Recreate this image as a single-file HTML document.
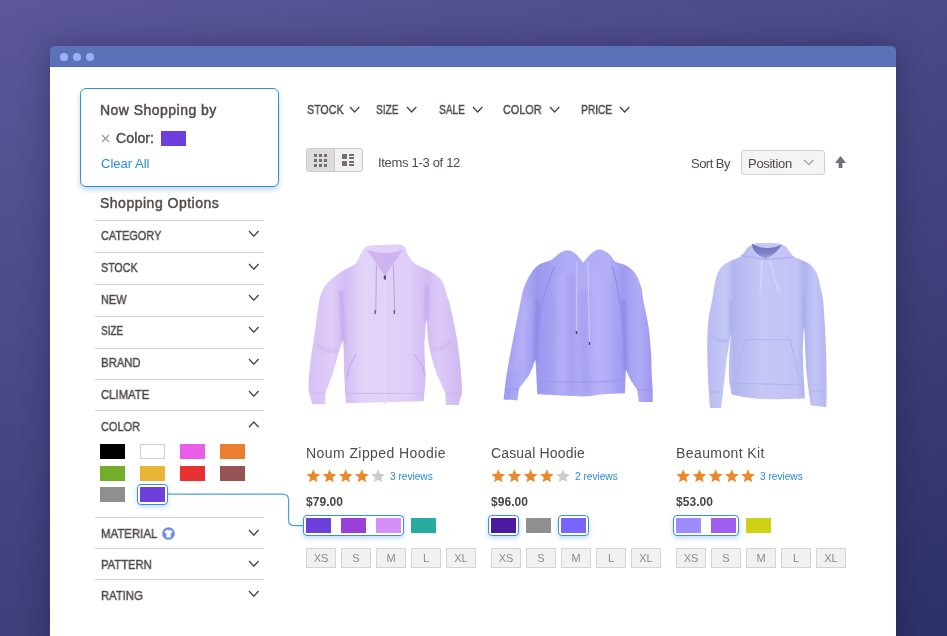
<!DOCTYPE html>
<html><head><meta charset="utf-8">
<style>
html,body{margin:0;padding:0;}
body{width:947px;height:636px;overflow:hidden;position:relative;
 background:linear-gradient(159deg,#5b5799 0%,#2e3068 100%);
 font-family:"Liberation Sans",sans-serif;color:#575352;-webkit-font-smoothing:antialiased;}
.win{position:absolute;left:50px;top:46px;width:846px;height:600px;background:linear-gradient(#5c72b8 0,#5c72b8 10px,#fff 10px);border-radius:5px 5px 0 0;
 box-shadow:0 0 28px rgba(20,18,60,0.35);overflow:hidden;}
.bar{position:absolute;left:0;top:0;width:846px;height:20px;background:#5c72b8;border-bottom:1px solid #5166ae;border-radius:5px 5px 0 0;}
.bar i{position:absolute;top:7px;width:8px;height:8px;border-radius:50%;background:#9caef8;}
.t{position:absolute;white-space:nowrap;line-height:1;will-change:transform;}
.sb{-webkit-text-stroke:0.45px currentColor;}
.hr{position:absolute;width:169px;height:1px;background:#cfcfcf;}
.chev{position:absolute;}
.sw{position:absolute;width:25px;height:15px;}
.sel{position:absolute;box-sizing:border-box;border:1.6px solid #3b90dd;border-radius:4px;box-shadow:0 2px 5px rgba(59,144,221,0.35);background:#fff;}
.size{position:absolute;width:28px;height:18px;background:#f1f1f1;border:1px solid #d5d5d5;font-size:11px;color:#8c8c8c;text-align:center;line-height:18px;}
</style></head>
<body>
<div class="win"><div class="bar"><i style="left:10px"></i><i style="left:23px"></i><i style="left:36px"></i></div></div>
<div style="position:absolute;left:80px;top:88px;width:197px;height:97px;border:1.3px solid #3490dc;border-radius:6px;box-shadow:0 3px 5px rgba(40,110,190,0.28);background:#fff"></div>
<div class="t sb" style="left:100.35px;top:103.18px;font-size:14px;color:#504b49;font-weight:normal;letter-spacing:0.468px;">Now Shopping by</div>
<svg style="position:absolute;left:101px;top:134px" width="9" height="9"><path d="M1 1L8 8M8 1L1 8" stroke="#9a9a9a" stroke-width="1.2"/></svg>
<div class="t sb" style="left:116.15px;top:131.18px;font-size:14px;color:#504b49;font-weight:normal;letter-spacing:0.130px;">Color:</div>
<div class="sw" style="left:161px;top:131px;background:#6f3fdb"></div>
<div class="t " style="left:100.60px;top:156.91px;font-size:13px;color:#2b8ad8;font-weight:normal;letter-spacing:0.000px;">Clear All</div>
<div class="t sb" style="left:100.45px;top:196.18px;font-size:14px;color:#504b49;font-weight:normal;letter-spacing:0.500px;">Shopping Options</div>
<div class="hr" style="left:95px;top:220.0px"></div>
<div class="t sb" style="left:100.95px;top:229.51px;font-size:12.2px;color:#504b49;font-weight:normal;letter-spacing:0.000px;transform:scaleX(0.8967);transform-origin:0 0;">CATEGORY</div>
<svg class="chev" style="left:248px;top:230.29999999999998px" width="11.6" height="7.2"><path d="M1 1 L5.8 6.2 L10.6 1" fill="none" stroke="#4a4646" stroke-width="1.35"/></svg>
<div class="hr" style="left:95px;top:252.0px"></div>
<div class="t sb" style="left:100.95px;top:261.71px;font-size:12.2px;color:#504b49;font-weight:normal;letter-spacing:0.000px;transform:scaleX(0.8759);transform-origin:0 0;">STOCK</div>
<svg class="chev" style="left:248px;top:262.5px" width="11.6" height="7.2"><path d="M1 1 L5.8 6.2 L10.6 1" fill="none" stroke="#4a4646" stroke-width="1.35"/></svg>
<div class="hr" style="left:95px;top:284.2px"></div>
<div class="t sb" style="left:100.95px;top:293.51px;font-size:12.2px;color:#504b49;font-weight:normal;letter-spacing:0.000px;transform:scaleX(0.8995);transform-origin:0 0;">NEW</div>
<svg class="chev" style="left:248px;top:294.3px" width="11.6" height="7.2"><path d="M1 1 L5.8 6.2 L10.6 1" fill="none" stroke="#4a4646" stroke-width="1.35"/></svg>
<div class="hr" style="left:95px;top:316.1px"></div>
<div class="t sb" style="left:100.95px;top:325.41px;font-size:12.2px;color:#504b49;font-weight:normal;letter-spacing:0.000px;transform:scaleX(0.8143);transform-origin:0 0;">SIZE</div>
<svg class="chev" style="left:248px;top:326.2px" width="11.6" height="7.2"><path d="M1 1 L5.8 6.2 L10.6 1" fill="none" stroke="#4a4646" stroke-width="1.35"/></svg>
<div class="hr" style="left:95px;top:348.0px"></div>
<div class="t sb" style="left:100.95px;top:357.21px;font-size:12.2px;color:#504b49;font-weight:normal;letter-spacing:0.000px;transform:scaleX(0.9289);transform-origin:0 0;">BRAND</div>
<svg class="chev" style="left:248px;top:358.0px" width="11.6" height="7.2"><path d="M1 1 L5.8 6.2 L10.6 1" fill="none" stroke="#4a4646" stroke-width="1.35"/></svg>
<div class="hr" style="left:95px;top:378.9px"></div>
<div class="t sb" style="left:100.95px;top:389.11px;font-size:12.2px;color:#504b49;font-weight:normal;letter-spacing:0.000px;transform:scaleX(0.9309);transform-origin:0 0;">CLIMATE</div>
<svg class="chev" style="left:248px;top:389.9px" width="11.6" height="7.2"><path d="M1 1 L5.8 6.2 L10.6 1" fill="none" stroke="#4a4646" stroke-width="1.35"/></svg>
<div class="hr" style="left:95px;top:410px"></div>
<div class="t sb" style="left:100.95px;top:420.81px;font-size:12.2px;color:#504b49;font-weight:normal;letter-spacing:0.000px;transform:scaleX(0.9007);transform-origin:0 0;">COLOR</div>
<svg class="chev" style="left:248px;top:420.5px" width="11.6" height="7.2"><path d="M1 6.2 L5.8 1 L10.6 6.2" fill="none" stroke="#4a4646" stroke-width="1.35"/></svg>
<div class="sw" style="left:100px;top:444px;background:#000000"></div>
<div class="sw" style="left:140px;top:444px;background:#fff;box-sizing:border-box;border:1px solid #cfcfcf"></div>
<div class="sw" style="left:180px;top:444px;background:#e95de9"></div>
<div class="sw" style="left:220px;top:444px;background:#ec7e32"></div>
<div class="sw" style="left:100px;top:466px;background:#72ad2c"></div>
<div class="sw" style="left:140px;top:466px;background:#e8b534"></div>
<div class="sw" style="left:180px;top:466px;background:#e83131"></div>
<div class="sw" style="left:220px;top:466px;background:#955353"></div>
<div class="sw" style="left:100px;top:487px;background:#8f8f8f"></div>
<div class="sel" style="left:137.4px;top:484.4px;width:30.2px;height:20.2px"></div>
<div class="sw" style="left:140px;top:487px;background:#6f3fdb"></div>
<div class="hr" style="left:95px;top:517.1px"></div>
<div class="t sb" style="left:101.05px;top:527.71px;font-size:12.2px;color:#504b49;font-weight:normal;letter-spacing:0.000px;transform:scaleX(0.9377);transform-origin:0 0;">MATERIAL</div>
<svg class="chev" style="left:248px;top:528.5px" width="11.6" height="7.2"><path d="M1 1 L5.8 6.2 L10.6 1" fill="none" stroke="#4a4646" stroke-width="1.35"/></svg>
<div class="hr" style="left:95px;top:547.9px"></div>
<div class="t sb" style="left:101.05px;top:558.91px;font-size:12.2px;color:#504b49;font-weight:normal;letter-spacing:0.000px;transform:scaleX(0.9206);transform-origin:0 0;">PATTERN</div>
<svg class="chev" style="left:248px;top:559.7px" width="11.6" height="7.2"><path d="M1 1 L5.8 6.2 L10.6 1" fill="none" stroke="#4a4646" stroke-width="1.35"/></svg>
<div class="hr" style="left:95px;top:578.8px"></div>
<div class="t sb" style="left:101.05px;top:589.61px;font-size:12.2px;color:#504b49;font-weight:normal;letter-spacing:0.000px;transform:scaleX(0.9262);transform-origin:0 0;">RATING</div>
<svg class="chev" style="left:248px;top:590.4000000000001px" width="11.6" height="7.2"><path d="M1 1 L5.8 6.2 L10.6 1" fill="none" stroke="#4a4646" stroke-width="1.35"/></svg>
<svg style="position:absolute;left:161.8px;top:526.7px" width="13" height="13" viewBox="0 0 14 14"><circle cx="7" cy="7" r="6.8" fill="#6e8ee8"/><path d="M2.8 4.6 L5.4 3 Q7 4.3 8.6 3 L11.2 4.6 L10.3 7 L9.3 6.6 L9.3 11.3 L4.7 11.3 L4.7 6.6 L3.7 7 Z" fill="#fff"/></svg>
<svg style="position:absolute;left:160px;top:488px" width="150" height="45"><path d="M7.6 6 H122.6 Q128.6 6 128.6 12 V31.7 Q128.6 37.7 134.6 37.7 H144" fill="none" stroke="#4d9fe6" stroke-width="1.25"/></svg>
<div class="t sb" style="left:306.75px;top:103.91px;font-size:12.2px;color:#504b49;font-weight:normal;letter-spacing:0.000px;transform:scaleX(0.8759);transform-origin:0 0;">STOCK</div>
<svg class="chev" style="left:348.8px;top:106.4px" width="11.3" height="7"><path d="M1 1 L5.65 6 L10.3 1" fill="none" stroke="#4a4646" stroke-width="1.35"/></svg>
<div class="t sb" style="left:376.45px;top:103.91px;font-size:12.2px;color:#504b49;font-weight:normal;letter-spacing:0.000px;transform:scaleX(0.8286);transform-origin:0 0;">SIZE</div>
<svg class="chev" style="left:405.5px;top:106.4px" width="11.3" height="7"><path d="M1 1 L5.65 6 L10.3 1" fill="none" stroke="#4a4646" stroke-width="1.35"/></svg>
<div class="t sb" style="left:438.85px;top:103.91px;font-size:12.2px;color:#504b49;font-weight:normal;letter-spacing:0.000px;transform:scaleX(0.8287);transform-origin:0 0;">SALE</div>
<svg class="chev" style="left:472.2px;top:106.4px" width="11.3" height="7"><path d="M1 1 L5.65 6 L10.3 1" fill="none" stroke="#4a4646" stroke-width="1.35"/></svg>
<div class="t sb" style="left:502.95px;top:103.91px;font-size:12.2px;color:#504b49;font-weight:normal;letter-spacing:0.000px;transform:scaleX(0.8916);transform-origin:0 0;">COLOR</div>
<svg class="chev" style="left:548.7px;top:106.4px" width="11.3" height="7"><path d="M1 1 L5.65 6 L10.3 1" fill="none" stroke="#4a4646" stroke-width="1.35"/></svg>
<div class="t sb" style="left:580.75px;top:103.91px;font-size:12.2px;color:#504b49;font-weight:normal;letter-spacing:0.000px;transform:scaleX(0.8377);transform-origin:0 0;">PRICE</div>
<svg class="chev" style="left:618.6px;top:106.4px" width="11.3" height="7"><path d="M1 1 L5.65 6 L10.3 1" fill="none" stroke="#4a4646" stroke-width="1.35"/></svg>
<div style="position:absolute;left:306px;top:148px;width:55px;height:22px;border:1px solid #cbcbcb;border-radius:3px;background:#f0f0f0;overflow:hidden"><div style="position:absolute;left:0;top:0;width:27px;height:22px;background:#dcdcdc;border-right:1px solid #cbcbcb"></div></div>
<svg style="position:absolute;left:0;top:0" width="947" height="636"><rect x="314" y="154" width="3" height="3" fill="#776d6d"/><rect x="314" y="159" width="3" height="3" fill="#776d6d"/><rect x="314" y="164" width="3" height="3" fill="#776d6d"/><rect x="319" y="154" width="3" height="3" fill="#776d6d"/><rect x="319" y="159" width="3" height="3" fill="#776d6d"/><rect x="319" y="164" width="3" height="3" fill="#776d6d"/><rect x="324" y="154" width="3" height="3" fill="#776d6d"/><rect x="324" y="159" width="3" height="3" fill="#776d6d"/><rect x="324" y="164" width="3" height="3" fill="#776d6d"/><rect x="342" y="154" width="5" height="5" fill="#776d6d"/><rect x="342" y="161" width="5" height="5" fill="#776d6d"/><rect x="349" y="154" width="5" height="2" fill="#776d6d"/><rect x="349" y="157" width="5" height="2" fill="#776d6d"/><rect x="349" y="161" width="5" height="2" fill="#776d6d"/><rect x="349" y="164" width="5" height="2" fill="#776d6d"/></svg>
<div class="t " style="left:377.80px;top:156.31px;font-size:13px;color:#504b49;font-weight:normal;letter-spacing:-0.314px;">Items 1-3 of 12</div>
<div class="t " style="left:691.30px;top:156.81px;font-size:13px;color:#504b49;font-weight:normal;letter-spacing:-0.517px;">Sort By</div>
<div style="position:absolute;left:741px;top:150px;width:82px;height:23px;border:1px solid #d0d0d0;border-radius:3px;background:#f4f4f4"></div>
<div class="t " style="left:748.20px;top:156.81px;font-size:13px;color:#504b49;font-weight:normal;letter-spacing:-0.293px;">Position</div>
<svg class="chev" style="left:803.4px;top:159px" width="11.5" height="6.5"><path d="M1 1 L5.75 5.5 L10.5 1" fill="none" stroke="#9a9a9a" stroke-width="1.1"/></svg>
<svg style="position:absolute;left:834px;top:155px" width="13" height="14"><path d="M6.5 1 L12 8 L8.4 8 L8.4 13 L4.6 13 L4.6 8 L1 8 Z" fill="#6b7377"/></svg>
<div class="t " style="left:305.90px;top:446.18px;font-size:14px;color:#504b49;font-weight:normal;letter-spacing:0.429px;">Noum Zipped Hoodie</div>
<svg style="position:absolute;left:0;top:0" width="947" height="636"><polygon points="313.30,469.20 315.20,473.78 320.15,474.18 316.38,477.40 317.53,482.22 313.30,479.64 309.07,482.22 310.22,477.40 306.45,474.18 311.40,473.78" fill="#e8892b"/><polygon points="329.50,469.20 331.40,473.78 336.35,474.18 332.58,477.40 333.73,482.22 329.50,479.64 325.27,482.22 326.42,477.40 322.65,474.18 327.60,473.78" fill="#e8892b"/><polygon points="345.70,469.20 347.60,473.78 352.55,474.18 348.78,477.40 349.93,482.22 345.70,479.64 341.47,482.22 342.62,477.40 338.85,474.18 343.80,473.78" fill="#e8892b"/><polygon points="361.90,469.20 363.80,473.78 368.75,474.18 364.98,477.40 366.13,482.22 361.90,479.64 357.67,482.22 358.82,477.40 355.05,474.18 360.00,473.78" fill="#e8892b"/><polygon points="378.10,469.20 380.00,473.78 384.95,474.18 381.18,477.40 382.33,482.22 378.10,479.64 373.87,482.22 375.02,477.40 371.25,474.18 376.20,473.78" fill="#cccccc"/></svg>
<div class="t " style="left:390.30px;top:472.07px;font-size:10.2px;color:#2b8ad8;font-weight:normal;letter-spacing:-0.038px;">3 reviews</div>
<div class="t " style="left:306.30px;top:495.94px;font-size:12px;color:#4a4544;font-weight:bold;letter-spacing:0.060px;">$79.00</div>
<div class="sel" style="left:303.4px;top:515.4px;width:100.2px;height:20.2px"></div>
<div class="sw" style="left:306px;top:518px;background:#6c3fdb"></div>
<div class="sw" style="left:341px;top:518px;background:#9b3fdb"></div>
<div class="sw" style="left:376px;top:518px;background:#d48ff8"></div>
<div class="sw" style="left:411px;top:518px;background:#2aab9f"></div>
<div class="size" style="left:306px;top:548px">XS</div>
<div class="size" style="left:341px;top:548px">S</div>
<div class="size" style="left:376px;top:548px">M</div>
<div class="size" style="left:411px;top:548px">L</div>
<div class="size" style="left:446px;top:548px">XL</div>
<div class="t " style="left:490.85px;top:446.18px;font-size:14px;color:#504b49;font-weight:normal;letter-spacing:0.154px;">Casual Hoodie</div>
<svg style="position:absolute;left:0;top:0" width="947" height="636"><polygon points="498.25,469.20 500.15,473.78 505.10,474.18 501.33,477.40 502.48,482.22 498.25,479.64 494.02,482.22 495.17,477.40 491.40,474.18 496.35,473.78" fill="#e8892b"/><polygon points="514.45,469.20 516.35,473.78 521.30,474.18 517.53,477.40 518.68,482.22 514.45,479.64 510.22,482.22 511.37,477.40 507.60,474.18 512.55,473.78" fill="#e8892b"/><polygon points="530.65,469.20 532.55,473.78 537.50,474.18 533.73,477.40 534.88,482.22 530.65,479.64 526.42,482.22 527.57,477.40 523.80,474.18 528.75,473.78" fill="#e8892b"/><polygon points="546.85,469.20 548.75,473.78 553.70,474.18 549.93,477.40 551.08,482.22 546.85,479.64 542.62,482.22 543.77,477.40 540.00,474.18 544.95,473.78" fill="#e8892b"/><polygon points="563.05,469.20 564.95,473.78 569.90,474.18 566.13,477.40 567.28,482.22 563.05,479.64 558.82,482.22 559.97,477.40 556.20,474.18 561.15,473.78" fill="#cccccc"/></svg>
<div class="t " style="left:575.25px;top:472.07px;font-size:10.2px;color:#2b8ad8;font-weight:normal;letter-spacing:-0.038px;">2 reviews</div>
<div class="t " style="left:491.25px;top:495.94px;font-size:12px;color:#4a4544;font-weight:bold;letter-spacing:0.060px;">$96.00</div>
<div class="sel" style="left:488.4px;top:515.4px;width:30.2px;height:20.2px"></div>
<div class="sel" style="left:558.4px;top:515.4px;width:30.2px;height:20.2px"></div>
<div class="sw" style="left:491px;top:518px;background:#4a1aa0"></div>
<div class="sw" style="left:526px;top:518px;background:#8f8f8f"></div>
<div class="sw" style="left:561px;top:518px;background:#7a64ff"></div>
<div class="size" style="left:491px;top:548px">XS</div>
<div class="size" style="left:526px;top:548px">S</div>
<div class="size" style="left:561px;top:548px">M</div>
<div class="size" style="left:596px;top:548px">L</div>
<div class="size" style="left:631px;top:548px">XL</div>
<div class="t " style="left:675.85px;top:446.18px;font-size:14px;color:#504b49;font-weight:normal;letter-spacing:0.405px;">Beaumont Kit</div>
<svg style="position:absolute;left:0;top:0" width="947" height="636"><polygon points="683.25,469.20 685.15,473.78 690.10,474.18 686.33,477.40 687.48,482.22 683.25,479.64 679.02,482.22 680.17,477.40 676.40,474.18 681.35,473.78" fill="#e8892b"/><polygon points="699.45,469.20 701.35,473.78 706.30,474.18 702.53,477.40 703.68,482.22 699.45,479.64 695.22,482.22 696.37,477.40 692.60,474.18 697.55,473.78" fill="#e8892b"/><polygon points="715.65,469.20 717.55,473.78 722.50,474.18 718.73,477.40 719.88,482.22 715.65,479.64 711.42,482.22 712.57,477.40 708.80,474.18 713.75,473.78" fill="#e8892b"/><polygon points="731.85,469.20 733.75,473.78 738.70,474.18 734.93,477.40 736.08,482.22 731.85,479.64 727.62,482.22 728.77,477.40 725.00,474.18 729.95,473.78" fill="#e8892b"/><polygon points="748.05,469.20 749.95,473.78 754.90,474.18 751.13,477.40 752.28,482.22 748.05,479.64 743.82,482.22 744.97,477.40 741.20,474.18 746.15,473.78" fill="#e8892b"/></svg>
<div class="t " style="left:760.25px;top:472.07px;font-size:10.2px;color:#2b8ad8;font-weight:normal;letter-spacing:-0.038px;">3 reviews</div>
<div class="t " style="left:676.25px;top:495.94px;font-size:12px;color:#4a4544;font-weight:bold;letter-spacing:0.060px;">$53.00</div>
<div class="sel" style="left:673.4px;top:515.4px;width:65.2px;height:20.2px"></div>
<div class="sw" style="left:676px;top:518px;background:#9d8cff"></div>
<div class="sw" style="left:711px;top:518px;background:#a05ef0"></div>
<div class="sw" style="left:746px;top:518px;background:#d0d016"></div>
<div class="size" style="left:676px;top:548px">XS</div>
<div class="size" style="left:711px;top:548px">S</div>
<div class="size" style="left:746px;top:548px">M</div>
<div class="size" style="left:781px;top:548px">L</div>
<div class="size" style="left:816px;top:548px">XL</div>
<svg style="position:absolute;left:0;top:0" width="947" height="636">
<defs>
<filter id="bl" x="-20%" y="-20%" width="140%" height="140%"><feGaussianBlur stdDeviation="1.6"/></filter><filter id="bl2" x="-30%" y="-30%" width="160%" height="160%"><feGaussianBlur stdDeviation="3.5"/></filter>
<linearGradient id="g1" gradientUnits="userSpaceOnUse" x1="309" y1="0" x2="460" y2="0">
<stop offset="0" stop-color="#d6c1f4"/><stop offset="0.15" stop-color="#dfcdf8"/><stop offset="0.24" stop-color="#d3bdf3"/><stop offset="0.35" stop-color="#e2d3f9"/><stop offset="0.65" stop-color="#dfcff8"/><stop offset="0.78" stop-color="#d2bcf3"/><stop offset="0.86" stop-color="#dccaf7"/><stop offset="1" stop-color="#d0b9f2"/></linearGradient>
<linearGradient id="g2" gradientUnits="userSpaceOnUse" x1="505" y1="0" x2="653" y2="0">
<stop offset="0" stop-color="#a19bf0"/><stop offset="0.12" stop-color="#b1acf6"/><stop offset="0.22" stop-color="#9d96ee"/><stop offset="0.4" stop-color="#b0abf6"/><stop offset="0.7" stop-color="#b3aef6"/><stop offset="0.8" stop-color="#a09af0"/><stop offset="0.9" stop-color="#b0abf5"/><stop offset="1" stop-color="#9e97ef"/></linearGradient>
<linearGradient id="g3" gradientUnits="userSpaceOnUse" x1="708" y1="0" x2="826" y2="0">
<stop offset="0" stop-color="#babcf2"/><stop offset="0.15" stop-color="#c6c8f6"/><stop offset="0.22" stop-color="#b3b5ef"/><stop offset="0.45" stop-color="#c6c7f6"/><stop offset="0.75" stop-color="#c2c3f5"/><stop offset="0.82" stop-color="#b1b3ef"/><stop offset="0.9" stop-color="#c2c4f5"/><stop offset="1" stop-color="#b6b8f1"/></linearGradient>
</defs>
<path d="M355.7 263.4 C358.8 260.4 359.2 256.0 361.2 253.1 C363.1 250.2 363.4 247.5 367.4 246.2 C371.4 244.8 379.1 245.1 385.0 245.0 C390.9 244.9 399.2 243.9 403.0 245.5 C406.8 247.1 405.9 251.5 407.8 254.5 C409.8 257.5 411.0 260.7 414.7 263.4 C418.4 266.1 425.4 268.3 429.8 270.9 C434.2 273.5 438.2 276.0 440.8 279.2 C443.4 282.4 443.6 285.1 445.3 290.0 C447.0 294.9 449.0 301.0 450.9 308.9 C452.8 316.8 455.0 327.8 456.6 337.2 C458.2 346.6 459.4 356.4 460.4 365.5 C461.3 374.6 462.3 391.9 462.3 391.9 C462.3 391.9 458.5 405.1 458.5 405.1 C458.5 405.1 446.0 405.0 446.0 405.0 C446.0 405.0 445.3 392.8 445.3 392.8 C445.3 392.8 438.5 378.8 435.8 371.1 C433.1 363.4 430.8 355.7 429.2 346.6 C427.6 337.5 426.4 316.4 426.4 316.4 C426.4 316.4 424.6 336.9 424.5 346.6 C424.4 356.4 425.5 367.3 425.5 374.9 C425.5 382.4 424.5 391.9 424.5 391.9 C424.5 391.9 423.6 401.3 423.6 401.3 C423.6 401.3 346.2 403.2 346.2 403.2 C346.2 403.2 345.3 395.7 345.3 395.7 C345.3 395.7 344.6 384.3 344.3 374.9 C344.0 365.4 343.4 339.0 343.4 339.0 C343.4 339.0 342.2 341.6 340.6 346.6 C339.0 351.6 335.7 363.5 334.0 369.2 C332.3 374.9 331.6 376.7 330.2 380.6 C328.8 384.5 325.5 392.8 325.5 392.8 C325.5 392.8 325.5 404.2 325.5 404.2 C325.5 404.2 312.3 404.2 312.3 404.2 C312.3 404.2 308.5 390.0 308.5 390.0 C308.5 390.0 308.2 389.0 308.5 384.3 C308.8 379.6 309.4 369.6 310.4 361.7 C311.3 353.8 312.9 346.0 314.2 337.2 C315.4 328.4 316.7 316.3 317.9 308.9 C319.1 301.5 319.7 297.4 321.4 292.9 C323.1 288.4 324.7 285.6 328.2 281.9 C331.7 278.2 338.0 274.0 342.6 270.9 C347.2 267.8 352.6 266.4 355.7 263.4 Z" fill="url(#g1)"/>
<clipPath id="c1"><path d="M355.7 263.4 C358.8 260.4 359.2 256.0 361.2 253.1 C363.1 250.2 363.4 247.5 367.4 246.2 C371.4 244.8 379.1 245.1 385.0 245.0 C390.9 244.9 399.2 243.9 403.0 245.5 C406.8 247.1 405.9 251.5 407.8 254.5 C409.8 257.5 411.0 260.7 414.7 263.4 C418.4 266.1 425.4 268.3 429.8 270.9 C434.2 273.5 438.2 276.0 440.8 279.2 C443.4 282.4 443.6 285.1 445.3 290.0 C447.0 294.9 449.0 301.0 450.9 308.9 C452.8 316.8 455.0 327.8 456.6 337.2 C458.2 346.6 459.4 356.4 460.4 365.5 C461.3 374.6 462.3 391.9 462.3 391.9 C462.3 391.9 458.5 405.1 458.5 405.1 C458.5 405.1 446.0 405.0 446.0 405.0 C446.0 405.0 445.3 392.8 445.3 392.8 C445.3 392.8 438.5 378.8 435.8 371.1 C433.1 363.4 430.8 355.7 429.2 346.6 C427.6 337.5 426.4 316.4 426.4 316.4 C426.4 316.4 424.6 336.9 424.5 346.6 C424.4 356.4 425.5 367.3 425.5 374.9 C425.5 382.4 424.5 391.9 424.5 391.9 C424.5 391.9 423.6 401.3 423.6 401.3 C423.6 401.3 346.2 403.2 346.2 403.2 C346.2 403.2 345.3 395.7 345.3 395.7 C345.3 395.7 344.6 384.3 344.3 374.9 C344.0 365.4 343.4 339.0 343.4 339.0 C343.4 339.0 342.2 341.6 340.6 346.6 C339.0 351.6 335.7 363.5 334.0 369.2 C332.3 374.9 331.6 376.7 330.2 380.6 C328.8 384.5 325.5 392.8 325.5 392.8 C325.5 392.8 325.5 404.2 325.5 404.2 C325.5 404.2 312.3 404.2 312.3 404.2 C312.3 404.2 308.5 390.0 308.5 390.0 C308.5 390.0 308.2 389.0 308.5 384.3 C308.8 379.6 309.4 369.6 310.4 361.7 C311.3 353.8 312.9 346.0 314.2 337.2 C315.4 328.4 316.7 316.3 317.9 308.9 C319.1 301.5 319.7 297.4 321.4 292.9 C323.1 288.4 324.7 285.6 328.2 281.9 C331.7 278.2 338.0 274.0 342.6 270.9 C347.2 267.8 352.6 266.4 355.7 263.4 Z"/></clipPath>
<g clip-path="url(#c1)" filter="url(#bl)">
<path d="M341 290 C342 310 343 325 343.4 345 M427 285 C427 300 426.5 310 426.4 322" stroke="#c3a9ec" stroke-width="3.5" fill="none"/>
<path d="M317 345 C322 350 330 352 338 350 M452 340 C447 346 440 350 432 349" stroke="#cdb5f0" stroke-width="2.5" fill="none"/>
</g>
<path d="M367 250 C375 262 380 268 385 276 C390 268 396 260 403 250 C392 254 378 254 367 250 Z" fill="#cdb3ef"/>
<path d="M384.9 276 L384.9 404" stroke="#e6dafa" stroke-width="1.2"/>
<rect x="383.8" y="275.5" width="2.2" height="4" fill="#5a4a6a"/>
<path d="M376.4 265 L375.8 312 M393.4 265 L394.8 312" stroke="#b39bdb" stroke-width="0.9"/>
<path d="M375.2 310 L375.2 314 M394.3 310 L394.3 314" stroke="#6a5f7a" stroke-width="1.4"/>
<path d="M356 354 C352 362 346 370 348 377 M414 354 C420 362 426 370 424 377" stroke="#c4aaec" stroke-width="1.2" fill="none"/>
<path d="M346 393.4 L424 393.4 M311 393 L325.5 393 M446 393.5 L461.5 393.5" stroke="#cfb8f1" stroke-width="1"/>
<path d="M551.1 260.0 C554.7 258.0 556.5 255.0 559.2 253.4 C561.9 251.8 564.5 250.2 567.2 250.2 C569.9 250.2 572.5 251.3 575.2 253.4 C577.9 255.5 583.2 262.7 583.2 262.7 C583.2 262.7 588.5 255.6 591.2 253.4 C593.9 251.2 596.4 249.4 599.3 249.4 C602.2 249.4 605.9 251.4 608.6 253.4 C611.3 255.4 612.4 259.4 615.3 261.4 C618.2 263.4 622.7 263.4 626.0 265.4 C629.3 267.4 632.7 269.6 635.3 273.4 C637.9 277.2 640.2 283.7 641.5 288.1 C642.8 292.5 642.1 293.7 643.2 300.0 C644.4 306.3 647.1 317.2 648.4 325.9 C649.7 334.5 650.4 343.2 651.0 351.9 C651.6 360.5 651.6 371.5 651.9 377.8 C652.2 384.1 652.7 389.9 652.7 389.9 C652.7 389.9 652.7 402.0 652.7 402.0 C652.7 402.0 638.9 402.0 638.9 402.0 C638.9 402.0 637.2 389.9 637.2 389.9 C637.2 389.9 632.2 383.0 630.3 379.5 C628.4 376.0 625.9 369.1 625.9 369.1 C625.9 369.1 625.1 393.3 625.1 393.3 C625.1 393.3 607.0 394.0 600.0 394.5 C593.0 395.0 593.7 396.4 583.2 396.4 C572.8 396.3 537.3 394.2 537.3 394.2 C537.3 394.2 536.8 383.7 536.5 377.8 C536.2 371.9 535.6 358.8 535.6 358.8 C535.6 358.8 532.3 369.4 529.6 374.3 C526.9 379.2 519.2 388.2 519.2 388.2 C519.2 388.2 517.5 400.3 517.5 400.3 C517.5 400.3 503.6 399.4 503.6 399.4 C503.6 399.4 504.1 395.2 504.5 391.6 C504.9 388.0 505.2 384.4 506.2 377.8 C507.2 371.2 509.0 360.5 510.6 351.9 C512.2 343.2 514.0 334.5 515.7 325.9 C517.4 317.2 519.7 306.0 520.9 300.0 C522.1 294.0 521.9 293.8 523.1 290.0 C524.4 286.2 526.0 281.5 528.4 277.4 C530.8 273.3 534.0 268.3 537.8 265.4 C541.6 262.5 547.5 262.0 551.1 260.0 Z" fill="url(#g2)"/>
<clipPath id="c2"><path d="M551.1 260.0 C554.7 258.0 556.5 255.0 559.2 253.4 C561.9 251.8 564.5 250.2 567.2 250.2 C569.9 250.2 572.5 251.3 575.2 253.4 C577.9 255.5 583.2 262.7 583.2 262.7 C583.2 262.7 588.5 255.6 591.2 253.4 C593.9 251.2 596.4 249.4 599.3 249.4 C602.2 249.4 605.9 251.4 608.6 253.4 C611.3 255.4 612.4 259.4 615.3 261.4 C618.2 263.4 622.7 263.4 626.0 265.4 C629.3 267.4 632.7 269.6 635.3 273.4 C637.9 277.2 640.2 283.7 641.5 288.1 C642.8 292.5 642.1 293.7 643.2 300.0 C644.4 306.3 647.1 317.2 648.4 325.9 C649.7 334.5 650.4 343.2 651.0 351.9 C651.6 360.5 651.6 371.5 651.9 377.8 C652.2 384.1 652.7 389.9 652.7 389.9 C652.7 389.9 652.7 402.0 652.7 402.0 C652.7 402.0 638.9 402.0 638.9 402.0 C638.9 402.0 637.2 389.9 637.2 389.9 C637.2 389.9 632.2 383.0 630.3 379.5 C628.4 376.0 625.9 369.1 625.9 369.1 C625.9 369.1 625.1 393.3 625.1 393.3 C625.1 393.3 607.0 394.0 600.0 394.5 C593.0 395.0 593.7 396.4 583.2 396.4 C572.8 396.3 537.3 394.2 537.3 394.2 C537.3 394.2 536.8 383.7 536.5 377.8 C536.2 371.9 535.6 358.8 535.6 358.8 C535.6 358.8 532.3 369.4 529.6 374.3 C526.9 379.2 519.2 388.2 519.2 388.2 C519.2 388.2 517.5 400.3 517.5 400.3 C517.5 400.3 503.6 399.4 503.6 399.4 C503.6 399.4 504.1 395.2 504.5 391.6 C504.9 388.0 505.2 384.4 506.2 377.8 C507.2 371.2 509.0 360.5 510.6 351.9 C512.2 343.2 514.0 334.5 515.7 325.9 C517.4 317.2 519.7 306.0 520.9 300.0 C522.1 294.0 521.9 293.8 523.1 290.0 C524.4 286.2 526.0 281.5 528.4 277.4 C530.8 273.3 534.0 268.3 537.8 265.4 C541.6 262.5 547.5 262.0 551.1 260.0 Z"/></clipPath>
<g clip-path="url(#c2)" filter="url(#bl)">
<path d="M537.5 300 C537 320 536 340 535.6 362 M623.5 300 C624 330 625 350 625.9 372" stroke="#8f88e6" stroke-width="3.5" fill="none"/>
</g><g clip-path="url(#c2)" filter="url(#bl2)">
<path d="M571 275 C572 320 572 350 571 395 M584 290 C584 330 585 360 586 395" stroke="#958ee7" stroke-width="4" fill="none" opacity="0.75"/>
<path d="M561 275 C562 320 562 350 561 395 M595 270 C597 320 598 350 600 395" stroke="#bbb6f9" stroke-width="5" fill="none" opacity="0.75"/>
<path d="M552 280 C552 320 551 350 550 390 M612 280 C614 320 615 350 616 390" stroke="#9c95ea" stroke-width="3" fill="none" opacity="0.6"/>
<path d="M527 300 C524 330 520 350 516 370" stroke="#b9b4f7" stroke-width="4" fill="none"/>
</g>
<path d="M577 262 L576.5 332 M588 262 L589.5 343" stroke="#d0ccfa" stroke-width="0.9"/>
<path d="M576.5 331 L576.5 334 M589.5 342 L589.5 345" stroke="#4a4080" stroke-width="1.3"/>
<path d="M537.8 328 C542 300 548 280 555 266 M623.3 328 C620 300 617 280 612 266" stroke="#948ce8" stroke-width="1.2" fill="none"/>
<path d="M536.5 380 C560 383 600 383 625 380 M505 390 L519 388.5 M637.5 390 L652.5 390" stroke="#9d96ee" stroke-width="1.1" fill="none"/>
<path d="M740.9 256.2 C744.0 253.7 746.6 247.1 750.9 244.9 C755.1 242.7 761.0 242.9 766.4 242.9 C771.8 242.9 778.9 242.7 783.4 244.9 C787.9 247.1 790.5 253.8 793.3 256.2 C796.1 258.6 797.6 258.1 800.4 259.5 C803.2 260.9 807.6 262.4 810.3 264.7 C813.0 267.0 815.1 269.6 816.8 273.2 C818.4 276.8 819.2 281.5 820.2 286.0 C821.2 290.5 822.3 293.3 823.1 300.0 C823.9 306.7 824.4 317.6 824.9 326.4 C825.4 335.2 825.8 344.0 826.1 352.8 C826.4 361.6 826.5 371.0 826.6 379.2 C826.7 387.4 826.6 402.0 826.6 402.0 C826.6 402.0 825.8 407.3 825.8 407.3 C825.8 407.3 810.8 405.6 810.8 405.6 C810.8 405.6 807.4 382.1 806.4 370.4 C805.4 358.7 805.0 342.5 804.6 335.2 C804.2 327.9 803.8 326.4 803.8 326.4 C803.8 326.4 802.9 344.0 802.9 352.8 C802.9 361.6 803.5 372.4 803.8 379.2 C804.1 385.9 804.5 390.1 804.6 393.3 C804.7 396.5 804.6 398.5 804.6 398.5 C804.6 398.5 772.2 399.7 760.0 399.0 C747.8 398.3 731.5 394.5 731.5 394.5 C731.5 394.5 729.2 383.4 728.9 376.0 C728.6 368.6 729.2 357.2 729.6 350.0 C730.0 342.8 731.0 333.0 731.0 333.0 C731.0 333.0 728.0 350.2 726.7 360.0 C725.4 369.8 723.1 392.0 723.1 392.0 C723.1 392.0 721.1 408.0 721.1 408.0 C721.1 408.0 710.1 408.0 710.1 408.0 C710.1 408.0 708.9 395.0 708.4 385.0 C707.9 375.0 707.2 359.0 707.2 348.2 C707.2 337.4 707.6 328.0 708.4 320.0 C709.2 312.0 711.0 306.2 712.1 300.1 C713.2 294.0 713.9 287.8 714.9 283.1 C715.9 278.4 716.8 274.9 718.3 271.8 C719.8 268.7 721.6 266.7 724.0 264.7 C726.4 262.7 729.7 261.3 732.5 259.9 C735.3 258.5 737.8 258.7 740.9 256.2 Z" fill="url(#g3)"/>
<clipPath id="c3"><path d="M740.9 256.2 C744.0 253.7 746.6 247.1 750.9 244.9 C755.1 242.7 761.0 242.9 766.4 242.9 C771.8 242.9 778.9 242.7 783.4 244.9 C787.9 247.1 790.5 253.8 793.3 256.2 C796.1 258.6 797.6 258.1 800.4 259.5 C803.2 260.9 807.6 262.4 810.3 264.7 C813.0 267.0 815.1 269.6 816.8 273.2 C818.4 276.8 819.2 281.5 820.2 286.0 C821.2 290.5 822.3 293.3 823.1 300.0 C823.9 306.7 824.4 317.6 824.9 326.4 C825.4 335.2 825.8 344.0 826.1 352.8 C826.4 361.6 826.5 371.0 826.6 379.2 C826.7 387.4 826.6 402.0 826.6 402.0 C826.6 402.0 825.8 407.3 825.8 407.3 C825.8 407.3 810.8 405.6 810.8 405.6 C810.8 405.6 807.4 382.1 806.4 370.4 C805.4 358.7 805.0 342.5 804.6 335.2 C804.2 327.9 803.8 326.4 803.8 326.4 C803.8 326.4 802.9 344.0 802.9 352.8 C802.9 361.6 803.5 372.4 803.8 379.2 C804.1 385.9 804.5 390.1 804.6 393.3 C804.7 396.5 804.6 398.5 804.6 398.5 C804.6 398.5 772.2 399.7 760.0 399.0 C747.8 398.3 731.5 394.5 731.5 394.5 C731.5 394.5 729.2 383.4 728.9 376.0 C728.6 368.6 729.2 357.2 729.6 350.0 C730.0 342.8 731.0 333.0 731.0 333.0 C731.0 333.0 728.0 350.2 726.7 360.0 C725.4 369.8 723.1 392.0 723.1 392.0 C723.1 392.0 721.1 408.0 721.1 408.0 C721.1 408.0 710.1 408.0 710.1 408.0 C710.1 408.0 708.9 395.0 708.4 385.0 C707.9 375.0 707.2 359.0 707.2 348.2 C707.2 337.4 707.6 328.0 708.4 320.0 C709.2 312.0 711.0 306.2 712.1 300.1 C713.2 294.0 713.9 287.8 714.9 283.1 C715.9 278.4 716.8 274.9 718.3 271.8 C719.8 268.7 721.6 266.7 724.0 264.7 C726.4 262.7 729.7 261.3 732.5 259.9 C735.3 258.5 737.8 258.7 740.9 256.2 Z"/></clipPath>
<g clip-path="url(#c3)" filter="url(#bl)">
<path d="M731 300 C731 315 731 325 731 336 M804 295 C804 310 804 320 803.8 330" stroke="#a9acea" stroke-width="3" fill="none"/>
<path d="M712 335 C716 340 722 342 728 340" stroke="#adb0ec" stroke-width="2" fill="none"/>
</g>
<linearGradient id="hi3" x1="0" y1="0" x2="0" y2="1"><stop offset="0" stop-color="#6d70b5"/><stop offset="0.6" stop-color="#7e81c6"/><stop offset="1" stop-color="#a3a6e2"/></linearGradient>
<path d="M752.2 243.8 C751.5 250 757 255 765.4 259 C773 255 779.5 250 781.5 244.5 C776 247.5 770 248.2 766 248 C760 247.6 755 246 752.2 243.8 Z" fill="url(#hi3)"/>
<path d="M740.6 255.4 C750 257 758 258.5 765.4 259.3 C775 259 785 258 793.9 257" stroke="#a9ace8" stroke-width="1" fill="none"/>
<path d="M762.2 260.2 L760.1 294 M769.6 260.2 L779.1 292.9" stroke="#dcdcfb" stroke-width="0.9"/>
<path d="M745.2 339.7 C742 355 738 368 735.3 376.5 M790.5 339.7 C793 355 797 368 799 376.5 M745.2 339.7 L790.5 339.7" stroke="#b0b2ee" stroke-width="1" fill="none"/>
<path d="M729.5 383 L804 385 M708.5 392 L722.5 392 M811.5 391 L826 391" stroke="#b0b2ee" stroke-width="1"/>
</svg>
</body></html>
